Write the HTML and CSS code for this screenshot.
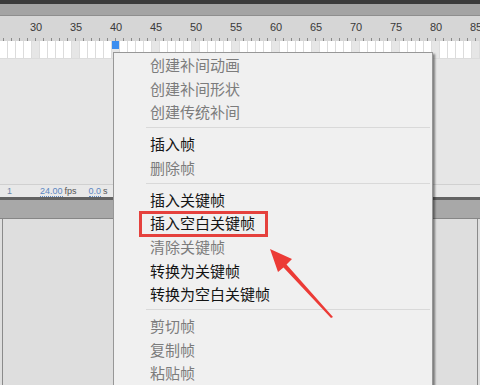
FILE: index.html
```html
<!DOCTYPE html>
<html lang="zh-CN">
<head>
    <meta charset="UTF-8">
    <title>时间轴 - 右键菜单</title>
    <link rel="stylesheet" href="styles.css">
</head>
<body>
    <div class="timeline">
        <div class="top-bar"></div>
        <div class="tab-bar"></div>

        <div class="ruler">
            <span>30</span><span>35</span><span>40</span><span>45</span><span>50</span><span>55</span>
            <span>60</span><span>65</span><span>70</span><span>75</span><span>80</span><span>85</span>
        </div>

        <div class="frames">
            <div class="playhead"></div>
        </div>

        <div class="layers"></div>

        <div class="status">
            <span class="frame-no">1</span>
            <span class="val fps">24.00</span><span class="unit">fps</span>
            <span class="val time">0.0</span><span class="unit">s</span>
        </div>

        <div class="divider"></div>
        <div class="panel-bar"></div>
        <div class="panel"></div>
    </div>

    <ul class="context-menu">
        <li class="item disabled">创建补间动画</li>
        <li class="item disabled">创建补间形状</li>
        <li class="item disabled">创建传统补间</li>
        <li class="sep"></li>
        <li class="item">插入帧</li>
        <li class="item disabled">删除帧</li>
        <li class="sep"></li>
        <li class="item">插入关键帧</li>
        <li class="item">插入空白关键帧</li>
        <li class="item disabled">清除关键帧</li>
        <li class="item">转换为关键帧</li>
        <li class="item">转换为空白关键帧</li>
        <li class="sep"></li>
        <li class="item disabled">剪切帧</li>
        <li class="item disabled">复制帧</li>
        <li class="item disabled">粘贴帧</li>
    </ul>

    <div class="highlight"></div>

    <svg class="arrow" width="480" height="385" viewBox="0 0 480 385">
        <polygon points="270,249 292,259 286.5,264.5 333,317 331,318 283.5,267.5 278,272" fill="#ec3b36"/>
    </svg>
</body>
</html>
```

FILE: styles.css
```css
* {
    margin: 0;
    padding: 0;
    box-sizing: border-box;
}

html, body {
    width: 480px;
    height: 385px;
    overflow: hidden;
}

body {
    font-family: "Noto Sans CJK SC", "Noto Sans", sans-serif;
    background-color: #dedede;
    position: relative;
}

.timeline {
    display: flex;
    flex-direction: column;
    height: 385px;
}

.top-bar {
    height: 4px;
    background-color: #3b3b3b;
}

.tab-bar {
    height: 12px;
    background-color: #a4a4a4;
    border-bottom: 1px solid #8e8e8e;
}

.ruler {
    height: 25px;
    display: flex;
    padding-left: 16px;
    background-color: #d6d6d6;
    background-image: repeating-linear-gradient(to right, transparent 0, transparent 3px, #8c8c8c 3px, #8c8c8c 4px, transparent 4px, transparent 8px);
    background-size: 100% 3px;
    background-position: 0 bottom;
    background-repeat: no-repeat;
    font-family: "Liberation Sans", Arial, sans-serif;
    font-size: 11px;
    color: #3a3a3a;
}

.ruler span {
    flex: 0 0 40px;
    text-align: center;
    line-height: 23px;
}

.frames {
    height: 18px;
    background-color: #ffffff;
    background-image:
        repeating-linear-gradient(to right, transparent 0, transparent 7px, #dcdcdc 7px, #dcdcdc 8px),
        repeating-linear-gradient(to right, #e6e6e6 0, #e6e6e6 8px, transparent 8px, transparent 40px);
    background-position: 0 0, 32px 0;
    border-bottom: 1px solid #dcdcdc;
}

.playhead {
    width: 7px;
    height: 8px;
    margin-left: 112px;
    background-color: #3c8ef0;
}

.layers {
    height: 125px;
    background-color: #e6e6e6;
}

.status {
    height: 13px;
    display: flex;
    align-items: center;
    padding-left: 7px;
    background-color: #e8e8e8;
    border-top: 1px solid #d0d0d0;
    font-family: "Liberation Sans", Arial, sans-serif;
    font-size: 9px;
    color: #555555;
}

.frame-no {
    color: #6b86a8;
    width: 33px;
}

.val {
    color: #5b86c2;
    border-bottom: 1px dotted #5b86c2;
    line-height: 10px;
}

.unit {
    margin-left: 2px;
    margin-right: 12px;
}

.divider {
    height: 3px;
    background-color: #626262;
}

.panel-bar {
    height: 19px;
    background-color: #a8a8a8;
    border-bottom: 1px solid #868686;
}

.panel {
    flex: 1;
    background-color: #dedede;
    border-left: 1px solid #8a8a8a;
    border-right: 1px solid #8a8a8a;
    margin: 0 2px;
}

/* context menu */
.context-menu {
    position: absolute;
    left: 113px;
    top: 52px;
    width: 320px;
    height: 345px;
    list-style: none;
    padding: 0 2px;
    background-color: #f0f0f0;
    border: 1px solid #979797;
    box-shadow: 2px 2px 2px rgba(0, 0, 0, 0.45);
}

.item {
    height: 23.6px;
    line-height: 23.6px;
    padding-left: 34px;
    font-size: 15px;
    color: #141414;
}

.item.disabled {
    color: #7c7c7c;
}

.sep {
    height: 8.4px;
    margin-left: 30px;
    background: linear-gradient(#d9d9d9, #d9d9d9) no-repeat 0 50% / 100% 1px;
}

.highlight {
    position: absolute;
    left: 139px;
    top: 211px;
    width: 129px;
    height: 26px;
    border: 3px solid #e5413d;
}

.arrow {
    position: absolute;
    left: 0;
    top: 0;
}
```
